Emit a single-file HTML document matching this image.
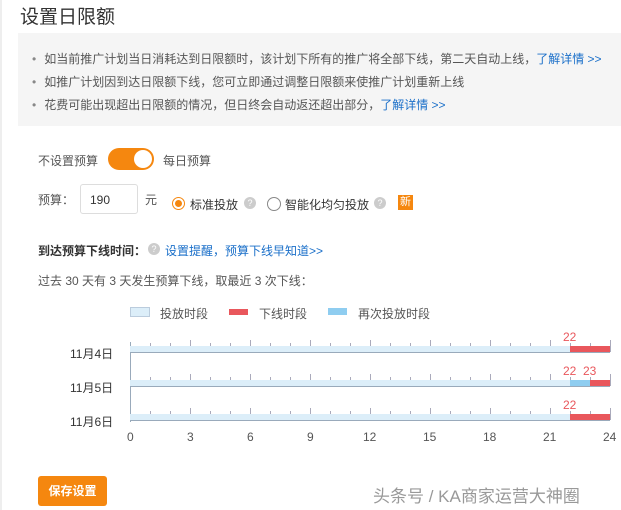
<!DOCTYPE html>
<html><head><meta charset="utf-8"><style>
body{margin:0;width:621px;height:510px;background:#fff;font-family:"Liberation Sans","Noto Sans CJK SC",sans-serif;position:relative;overflow:hidden;color:#555}
.a{position:absolute;white-space:nowrap}
.box{position:absolute;left:18px;top:33px;width:610px;height:93px;background:#f5f5f5}
.li{position:absolute;left:32px;font-size:12px;color:#555}
.li:before{content:"•";color:#888;margin-right:8px}
.lk{color:#1a6fc9}
.bar{position:absolute;left:130px;width:480px;height:6px;background:#dceef9;border-bottom:1px solid #9ab}
.red{position:absolute;height:6px;background:#e9575c}
.tick{position:absolute;width:1px;background:#aab}
.n{position:absolute;font-size:12px;color:#e9575c}
.x{position:absolute;top:430px;font-size:12px;color:#555}
.q{position:absolute;width:12px;height:12px;border-radius:50%;background:#ccc;color:#fff;font-size:9px;text-align:center;line-height:12px}
</style></head><body>
<div style="position:absolute;left:0;top:0;width:2px;height:510px;background:#eee"></div>
<div class="a" style="left:20px;top:2px;font-size:19px;color:#333">设置日限额</div>
<div class="box"></div>
<div class="li" style="top:50px">如当前推广计划当日消耗达到日限额时，该计划下所有的推广将全部下线，第二天自动上线，<span class="lk">了解详情 &gt;&gt;</span></div>
<div class="li" style="top:73px">如推广计划因到达日限额下线，您可立即通过调整日限额来使推广计划重新上线</div>
<div class="li" style="top:96px">花费可能出现超出日限额的情况，但日终会自动返还超出部分，<span class="lk">了解详情 &gt;&gt;</span></div>
<div class="a" style="left:38px;top:152px;font-size:12px">不设置预算</div>
<div style="position:absolute;left:108px;top:148px;width:46px;height:22px;border-radius:11px;background:#f5870f"><div style="position:absolute;right:2px;top:2px;width:18px;height:18px;border-radius:50%;background:#fff"></div></div>
<div class="a" style="left:163px;top:152px;font-size:12px">每日预算</div>
<div class="a" style="left:38px;top:191px;font-size:12px">预算：</div>
<div style="position:absolute;left:80px;top:184px;width:58px;height:30px;border:1px solid #ddd;border-radius:3px;box-sizing:border-box;font-size:12px;padding:8px 0 0 9px;color:#333">190</div>
<div class="a" style="left:145px;top:191px;font-size:12px">元</div>
<div style="position:absolute;left:172px;top:197px;width:13px;height:13px;border:1px solid #f5870f;border-radius:50%;box-sizing:border-box"><div style="position:absolute;left:2px;top:2px;width:7px;height:7px;border-radius:50%;background:#f5870f"></div></div>
<div class="a" style="left:190px;top:196px;font-size:12px;color:#333">标准投放</div>
<div class="q" style="left:244px;top:197px">?</div>
<div style="position:absolute;left:267px;top:197px;width:14px;height:14px;border:1px solid #888;border-radius:50%;box-sizing:border-box"></div>
<div class="a" style="left:285px;top:196px;font-size:12px;color:#333">智能化均匀投放</div>
<div class="q" style="left:374px;top:197px">?</div>
<div class="a" style="left:398px;top:195px;width:15px;height:15px;background:#f5870f;color:#fff;font-size:11px;text-align:center;line-height:15px">新</div>
<div class="a" style="left:38px;top:242px;font-size:12px;color:#333;font-weight:bold">到达预算下线时间：</div>
<div class="q" style="left:148px;top:243px">?</div>
<div class="a lk" style="left:165px;top:242px;font-size:12px">设置提醒，预算下线早知道&gt;&gt;</div>
<div class="a" style="left:38px;top:272px;font-size:12px">过去 30 天有 3 天发生预算下线，取最近 3 次下线：</div>
<div style="position:absolute;left:130px;top:307px;width:18px;height:8px;background:#dceef9;border:1px solid #bcd"></div>
<div class="a" style="left:160px;top:305px;font-size:12px">投放时段</div>
<div style="position:absolute;left:229px;top:309px;width:19px;height:6px;background:#e9575c"></div>
<div class="a" style="left:259px;top:305px;font-size:12px">下线时段</div>
<div style="position:absolute;left:328px;top:308px;width:19px;height:7px;background:#8fcdf0"></div>
<div class="a" style="left:358px;top:305px;font-size:12px">再次投放时段</div>
<div style="position:absolute;left:130px;top:342px;width:1px;height:80px;background:#9ab"></div>
<div id="rows"></div>
<div class="a" style="left:70px;top:345px;font-size:12px;color:#333">11月4日</div>
<div class="a" style="left:70px;top:379px;font-size:12px;color:#333">11月5日</div>
<div class="a" style="left:70px;top:413px;font-size:12px;color:#333">11月6日</div>
<div class="bar" style="top:346px"></div><div class="red" style="left:570px;width:40px;top:346px"></div>
<div class="bar" style="top:380px"></div><div style="position:absolute;left:570px;width:20px;top:380px;height:6px;background:#8fcdf0"></div><div class="red" style="left:590px;width:20px;top:380px"></div>
<div class="bar" style="top:414px"></div><div class="red" style="left:570px;width:40px;top:414px"></div>
<div class="n" style="left:563px;top:330px">22</div>
<div class="n" style="left:563px;top:364px">22</div><div class="n" style="left:583px;top:364px">23</div>
<div class="n" style="left:563px;top:398px">22</div>
<script>
var h='';for(var r=0;r<3;r++){for(var i=1;i<=24;i++){var big=i%3==0;h+='<div class="tick" style="left:'+(130+i*20)+'px;top:'+(346+r*34-(big?6:3))+'px;height:'+(big?12:9)+'px"></div>';}}
var xs='';for(var i=0;i<=24;i+=3){xs+='<div class="x" style="left:'+(130+i*20-(i>=10?7:3))+'px">'+i+'</div>';}
document.getElementById('rows').innerHTML=h+xs;
</script>
<div class="a" style="left:38px;top:476px;width:69px;height:30px;background:#f5870f;border-radius:3px;color:#fff;font-size:12px;font-weight:bold;text-align:center;line-height:30px">保存设置</div>
<div class="a" style="left:373px;top:482px;font-size:17px;color:#999">头条号 / KA商家运营大神圈</div>
</body></html>
